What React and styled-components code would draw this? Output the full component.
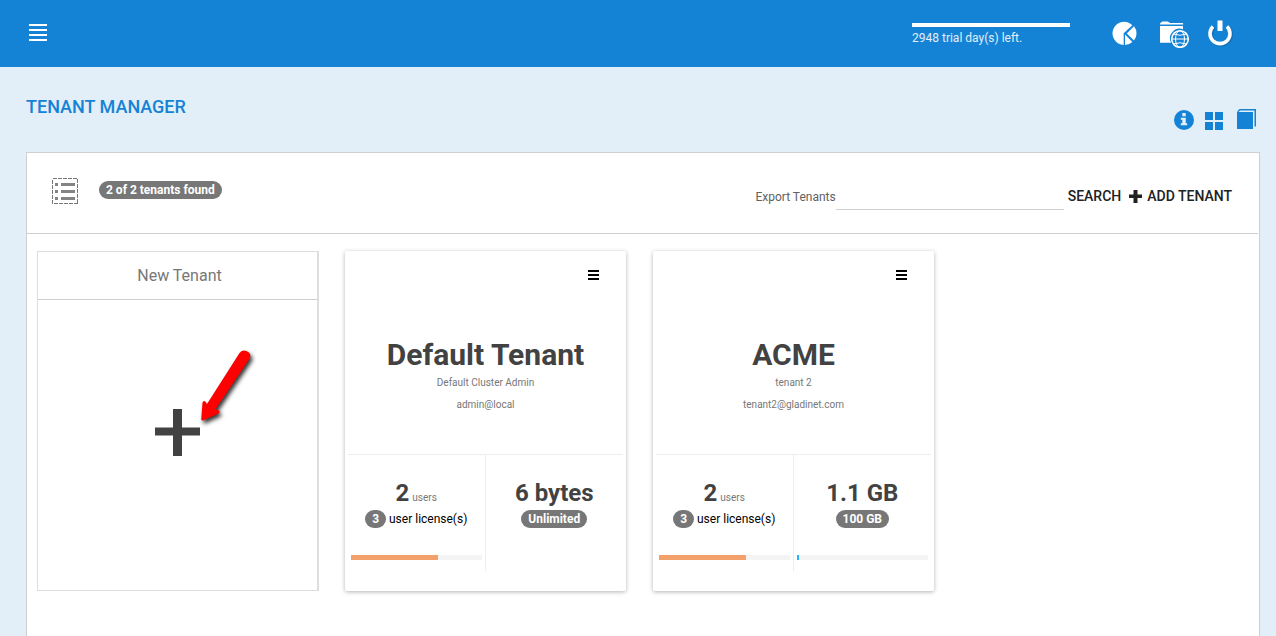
import React, { useState } from "react";
import styled, { createGlobalStyle } from "styled-components";

const tenants = [
    {
        id: 1,
        name: "Default Tenant",
        admin: "Default Cluster Admin",
        email: "admin@local",
        users: 2,
        licenses: 3,
        used: "6 bytes",
        quota: "Unlimited",
        storage: null,
    },
    {
        id: 2,
        name: "ACME",
        admin: "tenant 2",
        email: "tenant2@gladinet.com",
        users: 2,
        licenses: 3,
        used: "1.1 GB",
        quota: "100 GB",
        storage: 1.1,
    },
];

function MenuIcon() {
    return (
        <svg width="18" height="18" viewBox="0 0 18 18" fill="#fff" shapeRendering="crispEdges">
            <path d="M0 0h18v2H0zM0 5h18v2H0zM0 10h18v2H0zM0 15h18v2H0z" />
        </svg>
    );
}

function PieIcon() {
    return (
        <svg width="26" height="26" viewBox="0 0 26 26" fill="#fff">
            <path d="M11.7 12.2V24A11.6 11.6 0 1 1 20.3 4.2z" />
            <path d="M22 5.3A11.4 11.4 0 0 1 22 19.6L14.8 12.4z" />
            <path d="M13 13.4l7.4 7.6a12 12 0 0 1-7.4 3z" />
        </svg>
    );
}

function FolderIcon() {
    return (
        <svg width="30" height="28" viewBox="0 0 30 28" fill="#fff">
            <path d="M0 4.600V3.400L2.200 1.500h5.600l2.200 1.500h12.400a.8.8 0 0 1 .8.8v.8z" />
            <path d="M0 6h23v3.200A9.800 9.800 0 0 0 11 22.800H0z" />
            <g fill="none" stroke="#fff">
                <circle cx="20" cy="19" r="8.300" strokeWidth="1.600" />
                <ellipse cx="20" cy="19" rx="4.500" ry="8.300" />
                <path d="M11.700 19h16.600M13.500 14Q20 16.500 26.500 14M13.500 24Q20 21.500 26.500 24" />
            </g>
        </svg>
    );
}

function PowerIcon() {
    return (
        <svg width="28" height="30" viewBox="0 0 28 30" fill="none" stroke="#fff">
            <g stroke="#0b4f85" opacity=".4" transform="translate(1 1)">
                <path d="M7.5 7A10 10 0 1 0 20.5 7" strokeWidth="4" />
            </g>
            <path d="M7 7.500A10 10 0 1 0 21 7.500" strokeWidth="3.600" />
            <path d="M14 1.500v10.500" strokeWidth="5" />
        </svg>
    );
}

function InfoIcon() {
    return (
        <svg width="20" height="20" viewBox="0 0 20 20">
            <circle cx="10" cy="10" r="10" fill="#1583d5" />
            <path d="M8.3 3h3.400v3.300H8.300zM6.800 7.800h5v5.400h1.400v2H6.800v-2h1.500V9.800H6.800z" fill="#e2eef8" />
        </svg>
    );
}

function GridIcon() {
    return (
        <svg width="20" height="20" viewBox="0 0 20 20" fill="#1583d5" shapeRendering="crispEdges">
            <path d="M1 2h8v8H1zM11 2h8v8h-8zM1 12h8v8H1zM11 12h8v8h-8z" />
        </svg>
    );
}

function BookIcon() {
    return (
        <svg width="20" height="21" viewBox="0 0 20 21" fill="#1583d5">
            <path d="M0 3h16v17H0z" />
            <path d="M0 2.500L2.500 0H19v17.500h-1.500V1.500H3L1.500 3z" />
        </svg>
    );
}

function ListIcon() {
    return (
        <svg width="26" height="26" viewBox="0 0 26 26" shapeRendering="crispEdges">
            <rect x=".5" y=".5" width="25" height="25" fill="none" stroke="#777" strokeDasharray="4 1" />
            <path d="M3 5h3v3H3zM9 5h14v3H9zM3 12h3v3H3zM9 12h14v3H9zM3 19h3v3H3zM9 19h14v3H9z" fill="#848484" />
        </svg>
    );
}

function PlusIcon() {
    return (
        <svg width="13" height="13" viewBox="0 0 13 13" fill="#212121">
            <path d="M4.500 0h4v4.500H13v3.500H8.500V13h-4V8H0V4.500h4.500z" />
        </svg>
    );
}

function BigPlus() {
    return (
        <svg width="45" height="47" viewBox="0 0 45 47" fill="#424242">
            <path d="M18 0h9v18.500h18v8H27V47h-9V26.500H0v-8h18z" />
        </svg>
    );
}

function Arrow() {
    return (
        <svg width="64" height="84" viewBox="0 0 64 84">
            <path
                d="M41.500 7Q44.500 3.200 49 5.200Q54 8 51.500 12.800L17.500 63.200L20.500 64.300Q22.500 65.700 20.500 67.500L5 74.500Q3 75 3.300 72.500L4.500 56.500Q5.500 54 7.300 55.500L9 58z"
                fill="#f00"
            />
        </svg>
    );
}

function TenantCard({ tenant }) {
    return (
        <Card>
            <CardTop>
                <CardMenu aria-label={"Menu for " + tenant.name}>
                    <svg width="11" height="10" viewBox="0 0 11 10" shapeRendering="crispEdges">
                        <path d="M0 0h11v2H0zM0 4h11v2H0zM0 8h11v2H0z" />
                    </svg>
                </CardMenu>
                <h2>{tenant.name}</h2>
                <p>{tenant.admin}</p>
                <p>{tenant.email}</p>
            </CardTop>
            <Stats>
                <Stat>
                    <Amount>
                        {tenant.users} <small>users</small>
                    </Amount>
                    <Detail>
                        <Badge>{tenant.licenses}</Badge> user license(s)
                    </Detail>
                    <Track>
                        <Fill $color="#f4a06a" style={{ width: (tenant.users / tenant.licenses) * 100 + "%" }} />
                    </Track>
                </Stat>
                <Stat>
                    <Amount>{tenant.used}</Amount>
                    <Detail>
                        <Badge>{tenant.quota}</Badge>
                    </Detail>
                    {tenant.storage && (
                        <Track>
                            <Fill $color="#29b6f6" style={{ width: tenant.storage + "%" }} />
                        </Track>
                    )}
                </Stat>
            </Stats>
        </Card>
    );
}

function App() {
    const [search, setSearch] = useState("");

    return (
        <>
            <GlobalStyle />
            <Page>
                <Header>
                    <IconButton aria-label="Menu"><MenuIcon /></IconButton>
                    <Trial>
                        <TrialBar />
                        2948 trial day(s) left.
                    </Trial>
                    <HeaderIcons>
                        <IconButton aria-label="Reports"><PieIcon /></IconButton>
                        <IconButton aria-label="Web files"><FolderIcon /></IconButton>
                        <IconButton aria-label="Log out"><PowerIcon /></IconButton>
                    </HeaderIcons>
                </Header>

                <TitleRow>
                    <h1>TENANT MANAGER</h1>
                    <TitleIcons>
                        <IconButton aria-label="Information"><InfoIcon /></IconButton>
                        <IconButton aria-label="Grid view"><GridIcon /></IconButton>
                        <IconButton aria-label="Documentation"><BookIcon /></IconButton>
                    </TitleIcons>
                </TitleRow>

                <Panel>
                    <Toolbar>
                        <IconButton aria-label="List view"><ListIcon /></IconButton>
                        <Found><Badge>2 of 2 tenants found</Badge></Found>
                        <Actions>
                            <ExportLink href="#export">Export Tenants</ExportLink>
                            <SearchInput
                                type="text"
                                aria-label="Search tenants"
                                value={search}
                                onChange={(e) => setSearch(e.target.value)}
                            />
                            <TextButton>SEARCH</TextButton>
                            <TextButton><PlusIcon /> ADD TENANT</TextButton>
                        </Actions>
                    </Toolbar>

                    <Cards>
                        <NewCard>
                            <h2>New Tenant</h2>
                            <NewBody>
                                <IconButton aria-label="New tenant"><BigPlus /></IconButton>
                                <Pointer><Arrow /></Pointer>
                            </NewBody>
                        </NewCard>
                        {tenants.map((tenant) => (
                            <TenantCard key={tenant.id} tenant={tenant} />
                        ))}
                    </Cards>
                </Panel>
            </Page>
        </>
    );
}

const GlobalStyle = createGlobalStyle`
    * {
        box-sizing: border-box;
    }

    body {
        margin: 0;
        background: #e2eef8;
        color: #212121;
        font-family: Roboto, "Liberation Sans", sans-serif;
        font-size: 12px;
    }

    h1, h2, p {
        margin: 0;
    }

    button, input {
        padding: 0;
        border: 0;
        background: none;
        font-family: inherit;
        color: inherit;
    }

    button {
        cursor: pointer;
    }

    svg {
        display: block;
    }
`;

const Page = styled.div`
    display: flex;
    flex-direction: column;
    min-height: 100vh;
`;

const Header = styled.header`
    display: flex;
    align-items: center;
    height: 67px;
    padding: 0 42px 2px 29px;
    background: #1583d5;
`;

const IconButton = styled.button`
    display: flex;
`;

const Trial = styled.div`
    width: 158px;
    margin-left: auto;
    padding-top: 8px;
    color: #e2eef8;
    line-height: 23px;
`;

const TrialBar = styled.div`
    height: 4px;
    background: #fff;
`;

const HeaderIcons = styled.div`
    display: flex;
    align-items: center;
    gap: 16px;
    margin-left: 42px;
    padding-top: 3px;

    button:first-child {
        margin-right: 6px;
    }
`;

const TitleRow = styled.div`
    display: flex;
    justify-content: space-between;
    align-items: flex-start;
    height: 85px;
    padding: 28px 19px 0 26px;

    h1 {
        font-size: 18px;
        font-weight: 500;
        line-height: 24px;
        color: #1583d5;
    }
`;

const TitleIcons = styled.div`
    display: flex;
    align-items: flex-end;
    gap: 12px;
    padding-top: 14px;

    button + button {
        margin-left: -2px;
    }

    button:last-child {
        margin-left: 1px;
    }
`;

const Panel = styled.main`
    flex: 1;
    margin: 0 16px 0 26px;
    border: 1px solid #cfcfcf;
    border-bottom: 0;
    background: #fff;
`;

const Toolbar = styled.div`
    display: flex;
    align-items: center;
    gap: 21px;
    height: 81px;
    margin-right: 1px;
    padding: 0 26px 4px 25px;
    border-bottom: 1px solid #cfcfcf;
`;

const Badge = styled.span`
    display: inline-block;
    padding: 0 7px;
    border-radius: 9px;
    background: #777;
    color: #fff;
    font-size: 12px;
    font-weight: 700;
    line-height: 18px;
`;

const Found = styled.div`
    padding-bottom: 2px;
`;

const Actions = styled.div`
    display: flex;
    align-items: flex-end;
    margin-left: auto;
    padding-top: 8px;
`;

const ExportLink = styled.a`
    padding-bottom: 2px;
    color: #616161;
    text-decoration: none;
    line-height: 22px;
`;

const SearchInput = styled.input`
    width: 228px;
    height: 30px;
    margin-right: 4px;
    border-bottom: 1px solid #cfcfcf;
    outline: none;
`;

const TextButton = styled.button`
    display: flex;
    align-items: center;
    gap: 5px;
    padding-bottom: 4px;
    font-size: 14px;
    font-weight: 500;
    line-height: 20px;

    & + & {
        margin-left: 8px;
    }
`;

const Cards = styled.div`
    display: grid;
    grid-template-columns: repeat(auto-fill, 282px);
    gap: 26px;
    padding: 17px 10px;
`;

const NewCard = styled.section`
    display: flex;
    flex-direction: column;
    height: 340px;
    border: 1px solid #dedede;
    border-right-width: 2px;

    h2 {
        padding-left: 4px;
        border-bottom: 1px solid #cfcfcf;
        font-size: 16px;
        font-weight: 400;
        line-height: 47px;
        text-align: center;
        color: #777;
    }
`;

const NewBody = styled.div`
    position: relative;
    display: flex;
    flex: 1;
    justify-content: center;
    align-items: center;
    padding-bottom: 25px;
`;

/* sits on top of the card, aimed at the plus */
const Pointer = styled.div`
    position: absolute;
    left: 160px;
    top: 46px;
    pointer-events: none;
    filter: drop-shadow(2px 3px 2px rgba(0, 0, 0, 0.8));
`;

const Card = styled.section`
    display: flex;
    flex-direction: column;
    height: 340px;
    margin-right: 1px;
    padding: 0 3px;
    border-radius: 2px;
    background: #fff;
    box-shadow: 0 1px 4px rgba(0, 0, 0, 0.3);
`;

const CardTop = styled.div`
    display: flex;
    flex-direction: column;
    align-items: center;
    height: 204px;
    padding-top: 19px;
    border-bottom: 1px solid #eee;

    h2 {
        margin-top: 55px;
        font-size: 30px;
        font-weight: 700;
        line-height: 40px;
        color: #424242;
    }

    p {
        font-size: 10px;
        line-height: 22px;
        margin-top: -3px;
        color: #777;
    }

    p + p {
        margin-top: 0;
    }
`;

const CardMenu = styled.button`
    align-self: flex-end;
    margin-right: 24px;
`;

const Stats = styled.div`
    display: grid;
    grid-template-columns: 1fr 1fr;
    height: 116px;
`;

const Stat = styled.div`
    padding: 22px 3px 0;
    text-align: center;

    &:first-child {
        border-right: 1px solid #eee;
    }
`;

const Amount = styled.div`
    height: 32px;
    font-size: 24px;
    font-weight: 700;
    line-height: 32px;
    color: #424242;

    small {
        margin-left: -3px;
        font-size: 10px;
        font-weight: 400;
        line-height: 10px;
        color: #777;
    }
`;

const Detail = styled.div`
    height: 20px;
    color: #000;
    line-height: 20px;
`;

const Track = styled.div`
    height: 5px;
    margin-top: 26px;
    background: #f4f4f4;
`;

const Fill = styled.div`
    height: 100%;
    min-width: 2px;
    background: ${(props) => props.$color};
`;

export default App;
